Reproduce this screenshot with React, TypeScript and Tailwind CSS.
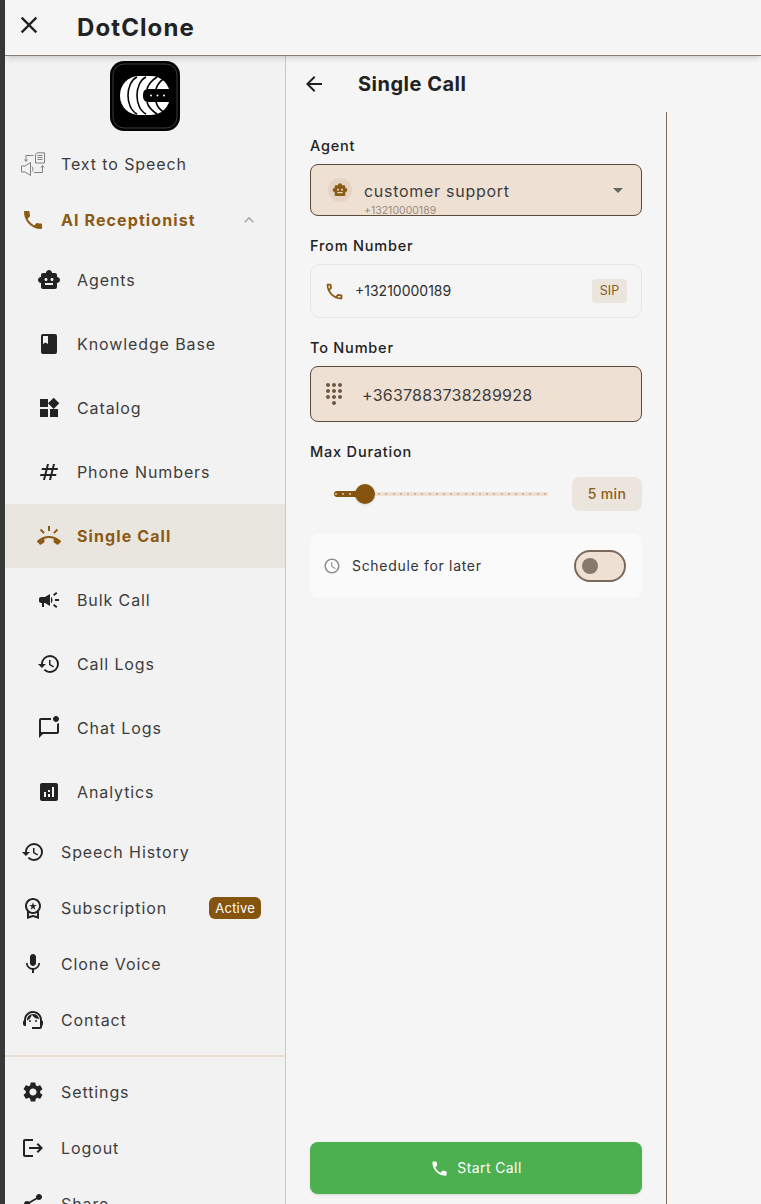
import type { ReactNode } from 'react';
import {
  MdAnalytics,
  MdArrowBack,
  MdArrowDropDown,
  MdBook,
  MdCampaign,
  MdClose,
  MdDialpad,
  MdExpandLess,
  MdHistory,
  MdLogout,
  MdMic,
  MdNumbers,
  MdOutlineMarkChatUnread,
  MdOutlinePhone,
  MdOutlineWorkspacePremium,
  MdPhone,
  MdRingVolume,
  MdSchedule,
  MdSettings,
  MdShare,
  MdSmartToy,
  MdSupportAgent,
  MdWidgets,
} from 'react-icons/md';

const font = "font-['Inter','Noto_Sans',sans-serif]";

function Logo() {
  const arcs = ['M27 16C15 22 15 47 27 53', 'M36 16C24 22 24 47 36 53', 'M47 16C41 20 38 24 37 28', 'M47 53C41 49 38 45 37 41', 'M55 17C50 20 47 24 46 28', 'M55 52C50 49 47 45 46 41'];
  return (
    <svg width="70" height="70" viewBox="0 0 70 70">
      <rect width="70" height="70" rx="14" fill="#000" />
      <rect x="3" y="3" width="64" height="64" rx="11" fill="none" stroke="#999" strokeWidth="0.4" />
      <rect x="10" y="15" width="50" height="39" rx="19" fill="#fff" />
      {arcs.map((d) => (
        <path key={d} d={d} fill="none" stroke="#000" strokeWidth="1.6" />
      ))}
      <path d="M38 28H60V41H38C34 41 33 38 33 34.500C33 31 34 28 38 28Z" fill="#000" />
      <circle cx="41" cy="34.500" r="1" fill="#fff" />
      <circle cx="47.500" cy="34.500" r="1" fill="#fff" />
      <circle cx="54" cy="34.500" r="1" fill="#fff" />
    </svg>
  );
}

function TextToSpeechIcon() {
  return (
    <svg width="24" height="24" viewBox="0 0 24 24" fill="none" stroke="#808080" strokeWidth="1">
      <path d="M16 0.800H23.500V11H14.500V2.300Z" />
      <path d="M16.500 3.500H21.500M16.500 5.500H21.500M16.500 7.500H21.500" />
      <path d="M12.500 3.500H5V9M3.500 7.500L5 9.500L6.500 7.500" />
      <path d="M0.500 14H4L9.500 10.500V23.500L4 20H0.500Z" />
      <path d="M11 14.500C12.300 16 12.300 18 11 19.500" />
      <path d="M13 20.500H21.500V14M20 15.500L21.500 13.500L23 15.500" />
    </svg>
  );
}

function NavRow({ icon, label, active, band, sub, badge, trailing }: { icon: ReactNode; label: string; active?: boolean; band?: boolean; sub?: boolean; badge?: string; trailing?: ReactNode }) {
  return (
    <div className={`flex items-center gap-4 shrink-0 ${sub ? 'h-16 pl-8' : 'h-14 pl-4'} ${band ? 'bg-[#e9e5df]' : ''}`}>
      <span className={`flex w-6 h-6 items-center justify-center text-2xl ${active ? 'text-[#8b5a14]' : 'text-[#222222]'}`}>{icon}</span>
      <span className={`text-base ${active ? 'font-bold text-[#8b5a14] tracking-[1.1px]' : 'text-[#3d3d3d] tracking-[0.9px]'}`}>{label}</span>
      {badge && <span className="ml-auto mr-6 rounded-md bg-[#85540f] px-1.5 h-[22px] leading-[22px] text-[13px] tracking-[0.2px] text-white">{badge}</span>}
      {trailing}
    </div>
  );
}

function Label({ children }: { children: ReactNode }) {
  return <div className="text-[14.500px] leading-[18px] font-medium tracking-[0.8px] text-[#222222]">{children}</div>;
}

function Sidebar() {
  return (
    <aside className="flex w-[281px] shrink-0 flex-col bg-[#f2f2f2] border-r border-[#cfc6be]">
      <div className="flex justify-center py-[5px] shrink-0">
        <Logo />
      </div>
      <NavRow icon={<TextToSpeechIcon />} label="Text to Speech" />
      <NavRow
        icon={<MdPhone />}
        label="AI Receptionist"
        active
        trailing={<MdExpandLess className="ml-auto mr-[26px] text-xl text-[#a8a8a8]" />}
      />
      <NavRow sub icon={<MdSmartToy />} label="Agents" />
      <NavRow sub icon={<MdBook />} label="Knowledge Base" />
      <NavRow sub icon={<MdWidgets />} label="Catalog" />
      <NavRow sub icon={<MdNumbers />} label="Phone Numbers" />
      <NavRow sub active band icon={<MdRingVolume />} label="Single Call" />
      <NavRow sub icon={<MdCampaign />} label="Bulk Call" />
      <NavRow sub icon={<MdHistory />} label="Call Logs" />
      <NavRow sub icon={<MdOutlineMarkChatUnread />} label="Chat Logs" />
      <NavRow sub icon={<MdAnalytics />} label="Analytics" />
      <NavRow icon={<MdHistory />} label="Speech History" />
      <NavRow icon={<MdOutlineWorkspacePremium />} label="Subscription" badge="Active" />
      <NavRow icon={<MdMic />} label="Clone Voice" />
      <NavRow icon={<MdSupportAgent />} label="Contact" />
      <div className="my-[7px] h-0.5 shrink-0 bg-[#e8ddd3]" />
      <NavRow icon={<MdSettings />} label="Settings" />
      <NavRow icon={<MdLogout />} label="Logout" />
      <NavRow icon={<MdShare />} label="Share" />
    </aside>
  );
}

function DurationSlider() {
  return (
    <div className="mt-4 flex items-center">
      <div className="relative ml-6 flex h-[34px] w-[214px] items-center">
        <div className="h-1 w-full rounded-full bg-[#efe0d4]" />
        <div className="absolute left-0 h-1.5 w-[31px] rounded-full bg-[#85540f]" />
        <div className="absolute inset-x-0 flex items-center justify-between pl-[1px] pr-0.5">
          {Array.from({ length: 30 }, (_, i) => (
            <span key={i} className={`h-0.5 w-0.5 rounded-full ${i < 4 ? 'bg-[#dcc7ae]' : 'bg-[#c4ab93]'}`} />
          ))}
        </div>
        <div className="absolute left-[21px] h-5 w-5 rounded-full bg-[#85540f] shadow-sm" />
      </div>
      <div className="ml-auto flex h-[34px] w-[70px] items-center justify-center rounded-lg bg-[#ebe5de] text-sm font-medium tracking-[0.3px] text-[#8b5a14]">5 min</div>
    </div>
  );
}

function CallForm() {
  return (
    <div className="flex h-full w-[381px] flex-col border-r border-[#7a6a5c] px-6 pb-2.5 pt-[25px]">
      <Label>Agent</Label>
      <div className="mt-[9px] flex h-[52px] items-center overflow-hidden rounded-lg border border-[#5a4a3c] bg-[#efe0d4] pl-[17px] pr-[11px]">
        <span className="flex h-6 w-6 items-center justify-center rounded-full bg-[#e5d3c3] text-base text-[#8b5a14]">
          <MdSmartToy />
        </span>
        <div className="ml-3 pt-[18px]">
          <div className="text-base leading-5 tracking-[0.72px] text-[#3d3d3d]">customer support</div>
          <div className="mt-[3px] text-[10.500px] leading-[14px] text-[#9a8c80]">+13210000189</div>
        </div>
        <MdArrowDropDown className="ml-auto text-2xl text-[#666666]" />
      </div>

      <div className="mt-[21px]">
        <Label>From Number</Label>
      </div>
      <div className="mt-[9px] flex h-[54px] items-center rounded-[10px] border border-[#e6e6e6] pl-[13px] pr-3.5">
        <MdOutlinePhone className="text-[21px] text-[#8b5a14]" />
        <span className="ml-[10px] text-sm text-[#2e2e2e]">+13210000189</span>
        <span className="ml-auto flex h-6 w-[35px] items-center justify-center rounded bg-[#ebe5de] text-[12.500px] text-[#8b5a14]">SIP</span>
      </div>

      <div className="mt-[21px]">
        <Label>To Number</Label>
      </div>
      <div className="mt-[9px] flex h-14 items-center rounded-lg border border-[#5a4a3c] bg-[#efe0d4] pl-[11px]">
        <MdDialpad className="text-2xl text-[#6e5744]" />
        <span className="ml-4 mt-0.5 text-base tracking-[0.24px] text-[#3d3d3d]">+3637883738289928</span>
      </div>

      <div className="mt-[21px]">
        <Label>Max Duration</Label>
      </div>
      <DurationSlider />

      <div className="mt-[23px] flex h-16 items-center rounded-lg bg-[#fafafa] pl-[13px] pr-4">
        <MdSchedule className="text-lg text-[#8e8e8e]" />
        <span className="ml-[11px] text-sm tracking-[0.69px] text-[#333333]">Schedule for later</span>
        <div className="ml-auto flex h-8 w-[52px] items-center rounded-full border-2 border-[#7a6a5c] bg-[#efe0d4] pl-1.5">
          <span className="h-4 w-4 rounded-full bg-[#86796c]" />
        </div>
      </div>

      <button className="mt-auto flex h-[52px] shrink-0 items-center justify-center gap-2 rounded-lg bg-[#4caf50] text-sm tracking-[0.4px] text-white shadow-sm">
        <MdPhone className="text-[19px]" />
        Start Call
      </button>
    </div>
  );
}

export default function App() {
  return (
    <div className={`flex h-[1204px] w-[761px] overflow-hidden bg-[#f5f5f5] ${font}`}>
      <div className="w-[5px] shrink-0 bg-[#383838]" />
      <div className="flex min-w-0 flex-1 flex-col">
        <header className="relative z-10 flex h-14 shrink-0 items-center border-b border-[#8a8078] bg-[#f5f5f5] shadow-md">
          <MdClose className="ml-2.5 -mt-1.5 text-[28px] text-[#222222]" />
          <span className="ml-[34px] text-2xl font-bold tracking-[1.1px] text-[#222222]">DotClone</span>
        </header>
        <div className="flex h-[1148px] min-h-0">
          <Sidebar />
          <main className="flex min-w-0 flex-1 flex-col">
            <div className="flex h-14 shrink-0 items-center pl-4">
              <MdArrowBack className="text-2xl text-[#222222]" />
              <span className="ml-8 text-[20px] font-bold tracking-[0.5px] text-[#222222]">Single Call</span>
            </div>
            <div className="min-h-0 flex-1">
              <CallForm />
            </div>
          </main>
        </div>
      </div>
    </div>
  );
}
